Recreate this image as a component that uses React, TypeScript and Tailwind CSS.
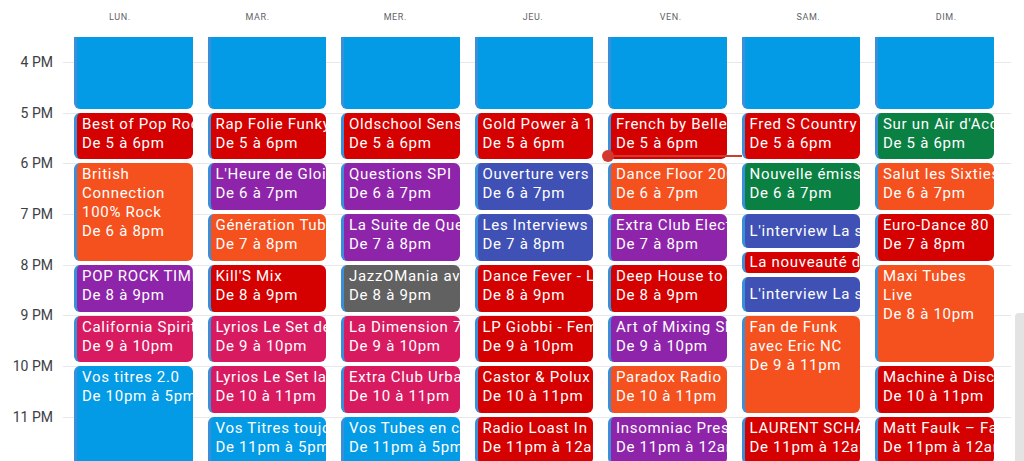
import React from 'react'

type Ev = {
  lines: string[]
  time?: string
  start: number
  end: number
  bg: string
}

const H = 50.7

const RED = 'bg-[#d50000]'
const ORANGE = 'bg-[#f4511e]'
const PURPLE = 'bg-[#8e24aa]'
const PINK = 'bg-[#d81b60]'
const BLUE = 'bg-[#039be5]'
const INDIGO = 'bg-[#3f51b5]'
const GREEN = 'bg-[#0b8043]'
const GRAY = 'bg-[#616161]'

const days = ['LUN.', 'MAR.', 'MER.', 'JEU.', 'VEN.', 'SAM.', 'DIM.']
const hours = ['3 PM', '4 PM', '5 PM', '6 PM', '7 PM', '8 PM', '9 PM', '10 PM', '11 PM', '12 AM']

const week: Ev[][] = [
  [
    { lines: [], start: 14, end: 17, bg: BLUE },
    { lines: ['Best of Pop Rock'], time: 'De 5 à 6pm', start: 17, end: 18, bg: RED },
    { lines: ['British', 'Connection', '100% Rock'], time: 'De 6 à 8pm', start: 18, end: 20, bg: ORANGE },
    { lines: ['POP ROCK TIME'], time: 'De 8 à 9pm', start: 20, end: 21, bg: PURPLE },
    { lines: ['California Spirit'], time: 'De 9 à 10pm', start: 21, end: 22, bg: PINK },
    { lines: ['Vos titres 2.0'], time: 'De 10pm à 5pm', start: 22, end: 29, bg: BLUE },
  ],
  [
    { lines: [], start: 14, end: 17, bg: BLUE },
    { lines: ['Rap Folie Funky'], time: 'De 5 à 6pm', start: 17, end: 18, bg: RED },
    { lines: ["L'Heure de Gloire"], time: 'De 6 à 7pm', start: 18, end: 19, bg: PURPLE },
    { lines: ['Génération Tubes'], time: 'De 7 à 8pm', start: 19, end: 20, bg: ORANGE },
    { lines: ["Kill'S Mix"], time: 'De 8 à 9pm', start: 20, end: 21, bg: RED },
    { lines: ['Lyrios Le Set de'], time: 'De 9 à 10pm', start: 21, end: 22, bg: PINK },
    { lines: ['Lyrios Le Set la'], time: 'De 10 à 11pm', start: 22, end: 23, bg: PINK },
    { lines: ['Vos Titres toujours'], time: 'De 11pm à 5pm', start: 23, end: 29, bg: BLUE },
  ],
  [
    { lines: [], start: 14, end: 17, bg: BLUE },
    { lines: ['Oldschool Sensation'], time: 'De 5 à 6pm', start: 17, end: 18, bg: RED },
    { lines: ['Questions SPI'], time: 'De 6 à 7pm', start: 18, end: 19, bg: PURPLE },
    { lines: ['La Suite de Que'], time: 'De 7 à 8pm', start: 19, end: 20, bg: PURPLE },
    { lines: ['JazzOMania avec'], time: 'De 8 à 9pm', start: 20, end: 21, bg: GRAY },
    { lines: ['La Dimension 7'], time: 'De 9 à 10pm', start: 21, end: 22, bg: PINK },
    { lines: ['Extra Club Urbain'], time: 'De 10 à 11pm', start: 22, end: 23, bg: PINK },
    { lines: ['Vos Tubes en continu'], time: 'De 11pm à 5pm', start: 23, end: 29, bg: BLUE },
  ],
  [
    { lines: [], start: 14, end: 17, bg: BLUE },
    { lines: ['Gold Power à 17h'], time: 'De 5 à 6pm', start: 17, end: 18, bg: RED },
    { lines: ['Ouverture vers'], time: 'De 6 à 7pm', start: 18, end: 19, bg: INDIGO },
    { lines: ['Les Interviews'], time: 'De 7 à 8pm', start: 19, end: 20, bg: INDIGO },
    { lines: ['Dance Fever - Live'], time: 'De 8 à 9pm', start: 20, end: 21, bg: RED },
    { lines: ['LP Giobbi - Feminine'], time: 'De 9 à 10pm', start: 21, end: 22, bg: RED },
    { lines: ['Castor & Polux'], time: 'De 10 à 11pm', start: 22, end: 23, bg: RED },
    { lines: ['Radio Loast In'], time: 'De 11pm à 12am', start: 23, end: 24, bg: RED },
  ],
  [
    { lines: [], start: 14, end: 17, bg: BLUE },
    { lines: ['French by Belle'], time: 'De 5 à 6pm', start: 17, end: 18, bg: RED },
    { lines: ['Dance Floor 2000'], time: 'De 6 à 7pm', start: 18, end: 19, bg: ORANGE },
    { lines: ['Extra Club Electro'], time: 'De 7 à 8pm', start: 19, end: 20, bg: PURPLE },
    { lines: ['Deep House to'], time: 'De 8 à 9pm', start: 20, end: 21, bg: RED },
    { lines: ['Art of Mixing Show'], time: 'De 9 à 10pm', start: 21, end: 22, bg: PURPLE },
    { lines: ['Paradox Radio'], time: 'De 10 à 11pm', start: 22, end: 23, bg: ORANGE },
    { lines: ['Insomniac Presents'], time: 'De 11pm à 12am', start: 23, end: 24, bg: PURPLE },
  ],
  [
    { lines: [], start: 14, end: 17, bg: BLUE },
    { lines: ['Fred S Country'], time: 'De 5 à 6pm', start: 17, end: 18, bg: RED },
    { lines: ['Nouvelle émission'], time: 'De 6 à 7pm', start: 18, end: 19, bg: GREEN },
    { lines: ["L'interview La suite"], start: 19, end: 19.75, bg: INDIGO },
    { lines: ['La nouveauté du jour'], start: 19.75, end: 20.25, bg: RED },
    { lines: ["L'interview La suite"], start: 20.25, end: 21, bg: INDIGO },
    { lines: ['Fan de Funk', 'avec Eric NC'], time: 'De 9 à 11pm', start: 21, end: 23, bg: ORANGE },
    { lines: ['LAURENT SCHAFFER'], time: 'De 11pm à 12am', start: 23, end: 24, bg: RED },
  ],
  [
    { lines: [], start: 14, end: 17, bg: BLUE },
    { lines: ["Sur un Air d'Accordéon"], time: 'De 5 à 6pm', start: 17, end: 18, bg: GREEN },
    { lines: ['Salut les Sixties'], time: 'De 6 à 7pm', start: 18, end: 19, bg: ORANGE },
    { lines: ['Euro-Dance 80'], time: 'De 7 à 8pm', start: 19, end: 20, bg: RED },
    { lines: ['Maxi Tubes', 'Live'], time: 'De 8 à 10pm', start: 20, end: 22, bg: ORANGE },
    { lines: ['Machine à Disco'], time: 'De 10 à 11pm', start: 22, end: 23, bg: RED },
    { lines: ['Matt Faulk – Fabulous'], time: 'De 11pm à 12am', start: 23, end: 24, bg: RED },
  ],
]

function EventCard({ ev }: { ev: Ev }) {
  const dur = ev.end - ev.start
  const short = dur < 1
  return (
    <div
      className={`absolute left-[8px] right-[7px] overflow-hidden rounded-[6px] border-l-[3px] border-[#3a8fd8] text-[15px] tracking-[0.7px] text-white ${ev.bg} ${
        short ? 'flex items-center pl-[5px] leading-[19px]' : 'pl-[5px] pt-[2px] leading-[19px]'
      }`}
      style={{ top: (ev.start - 15) * H, height: dur * H - 4 }}
    >
      <div className="min-w-0">
        {ev.lines.map((l, i) => (
          <p key={i} className="whitespace-nowrap">
            {l}
          </p>
        ))}
        {ev.time && <p className="whitespace-nowrap">{ev.time}</p>}
      </div>
    </div>
  )
}

export default function App() {
  return (
    <div className="relative h-[461px] w-[1024px] overflow-hidden bg-white font-['Roboto','Noto_Sans',sans-serif]">
      <header className="grid h-[37px] grid-cols-7 pl-[51px] pr-[9px]">
        {days.map((d) => (
          <div key={d} className="flex items-center justify-center pb-[1px] text-[9px] tracking-[0.6px] text-[#5f6368]">
            {d}
          </div>
        ))}
      </header>

      <main className="relative flex h-[424px] overflow-hidden">
        <div className="-mt-[25.7px] w-[63px] shrink-0">
          {hours.map((h) => (
            <div key={h} className="h-[50.7px] pr-[10px] text-right">
              <span className="block -translate-y-1/2 text-[14px] leading-[16px] text-[#3c4043]">{h}</span>
            </div>
          ))}
        </div>

        <div className="relative -mt-[25.7px] w-[948px] shrink-0">
          {hours.map((h) => (
            <div key={h} className="h-[50.7px] border-t border-[#e6e8eb]" />
          ))}

          <div className="absolute inset-0 flex pl-[3px] pr-[10.5px]">
            {week.map((evs, i) => (
              <div key={i} className="relative flex-1">
                {evs.map((ev, j) => (
                  <EventCard key={j} ev={ev} />
                ))}
                {i === 4 && (
                  <div
                    className="absolute left-[8px] right-[-8px] z-10 h-[2px] bg-[#d23a30]"
                    style={{ top: (17.854 - 15) * H - 1 }}
                  >
                    <span className="absolute left-[-6px] top-[-5px] h-[12px] w-[12px] rounded-full bg-[#d23a30]" />
                  </div>
                )}
              </div>
            ))}
          </div>
        </div>
      </main>

      <div className="absolute bottom-0 right-0 top-[313px] w-[9px] rounded-tl-[4px] bg-[#e3e3e3]" />
    </div>
  )
}
